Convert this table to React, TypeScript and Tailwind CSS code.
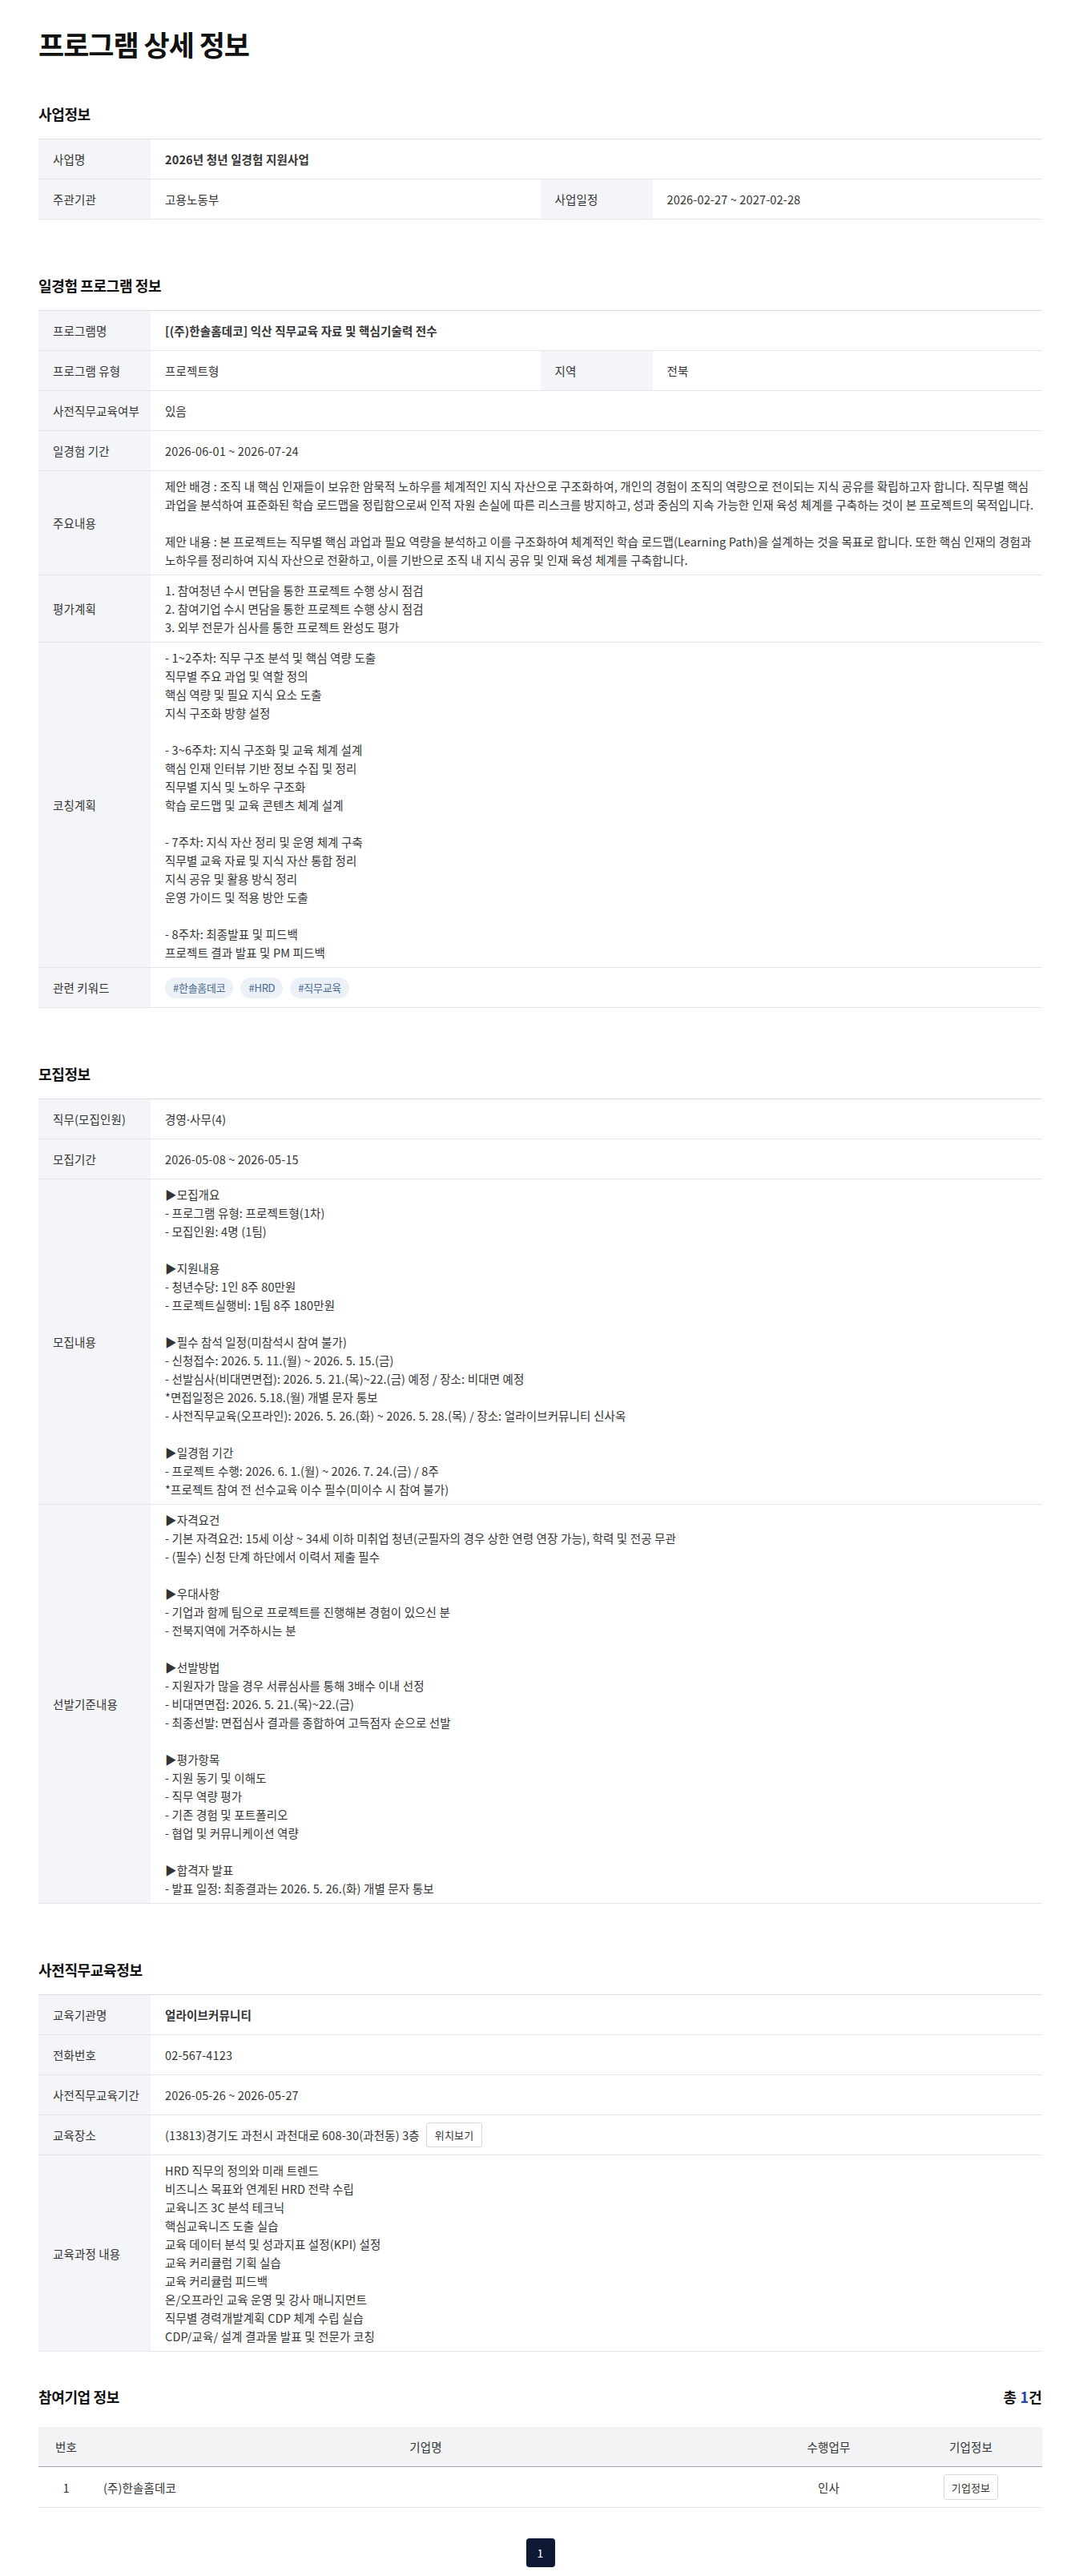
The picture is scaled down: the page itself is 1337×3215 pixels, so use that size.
import React from 'react'

const coaching = `- 1~2주차: 직무 구조 분석 및 핵심 역량 도출
직무별 주요 과업 및 역할 정의
핵심 역량 및 필요 지식 요소 도출
지식 구조화 방향 설정

- 3~6주차: 지식 구조화 및 교육 체계 설계
핵심 인재 인터뷰 기반 정보 수집 및 정리
직무별 지식 및 노하우 구조화
학습 로드맵 및 교육 콘텐츠 체계 설계

- 7주차: 지식 자산 정리 및 운영 체계 구축
직무별 교육 자료 및 지식 자산 통합 정리
지식 공유 및 활용 방식 정리
운영 가이드 및 적용 방안 도출

- 8주차: 최종발표 및 피드백
프로젝트 결과 발표 및 PM 피드백`

const recruit = `▶모집개요
- 프로그램 유형: 프로젝트형(1차)
- 모집인원: 4명 (1팀)

▶지원내용
- 청년수당: 1인 8주 80만원
- 프로젝트실행비: 1팀 8주 180만원

▶필수 참석 일정(미참석시 참여 불가)
- 신청접수: 2026. 5. 11.(월) ~ 2026. 5. 15.(금)
- 선발심사(비대면면접): 2026. 5. 21.(목)~22.(금) 예정 / 장소: 비대면 예정
*면접일정은 2026. 5.18.(월) 개별 문자 통보
- 사전직무교육(오프라인): 2026. 5. 26.(화) ~ 2026. 5. 28.(목) / 장소: 얼라이브커뮤니티 신사옥

▶일경험 기간
- 프로젝트 수행: 2026. 6. 1.(월) ~ 2026. 7. 24.(금) / 8주
*프로젝트 참여 전 선수교육 이수 필수(미이수 시 참여 불가)`

const selection = `▶자격요건
- 기본 자격요건: 15세 이상 ~ 34세 이하 미취업 청년(군필자의 경우 상한 연령 연장 가능), 학력 및 전공 무관
- (필수) 신청 단계 하단에서 이력서 제출 필수

▶우대사항
- 기업과 함께 팀으로 프로젝트를 진행해본 경험이 있으신 분
- 전북지역에 거주하시는 분

▶선발방법
- 지원자가 많을 경우 서류심사를 통해 3배수 이내 선정
- 비대면면접: 2026. 5. 21.(목)~22.(금)
- 최종선발: 면접심사 결과를 종합하여 고득점자 순으로 선발

▶평가항목
- 지원 동기 및 이해도
- 직무 역량 평가
- 기존 경험 및 포트폴리오
- 협업 및 커뮤니케이션 역량

▶합격자 발표
- 발표 일정: 최종결과는 2026. 5. 26.(화) 개별 문자 통보`

const curriculum = `HRD 직무의 정의와 미래 트렌드
비즈니스 목표와 연계된 HRD 전략 수립
교육니즈 3C 분석 테크닉
핵심교육니즈 도출 실습
교육 데이터 분석 및 성과지표 설정(KPI) 설정
교육 커리큘럼 기획 실습
교육 커리큘럼 피드백
온/오프라인 교육 운영 및 강사 매니지먼트
직무별 경력개발계획 CDP 체계 수립 실습
CDP/교육/ 설계 결과물 발표 및 전문가 코칭`

const evaluation = `1. 참여청년 수시 면담을 통한 프로젝트 수행 상시 점검
2. 참여기업 수시 면담을 통한 프로젝트 수행 상시 점검
3. 외부 전문가 심사를 통한 프로젝트 완성도 평가`

const mainContent = `제안 배경 : 조직 내 핵심 인재들이 보유한 암묵적 노하우를 체계적인 지식 자산으로 구조화하여, 개인의 경험이 조직의 역량으로 전이되는 지식 공유를 확립하고자 합니다. 직무별 핵심
과업을 분석하여 표준화된 학습 로드맵을 정립함으로써 인적 자원 손실에 따른 리스크를 방지하고, 성과 중심의 지속 가능한 인재 육성 체계를 구축하는 것이 본 프로젝트의 목적입니다.

제안 내용 : 본 프로젝트는 직무별 핵심 과업과 필요 역량을 분석하고 이를 구조화하여 체계적인 학습 로드맵(Learning Path)을 설계하는 것을 목표로 합니다. 또한 핵심 인재의 경험과
노하우를 정리하여 지식 자산으로 전환하고, 이를 기반으로 조직 내 지식 공유 및 인재 육성 체계를 구축합니다.`

function Label({ children }: { children: React.ReactNode }) {
  return (
    <div className="w-[140px] shrink-0 bg-[#f3f5f8] flex items-center pl-[18px] text-[#333]">
      {children}
    </div>
  )
}

function Value({ children, bold }: { children: React.ReactNode; bold?: boolean }) {
  return (
    <div
      className={`flex-1 flex items-center px-[18px] py-[7px] text-[#333] whitespace-pre-line ${
        bold ? 'font-bold text-[#222]' : ''
      }`}
    >
      {children}
    </div>
  )
}

function Row({ label, children, bold }: { label: string; children: React.ReactNode; bold?: boolean }) {
  return (
    <div className="flex min-h-[50px] border-b border-[#e3e6ea]">
      <Label>{label}</Label>
      <Value bold={bold}>{children}</Value>
    </div>
  )
}

function HalfRow({ items }: { items: [string, string][] }) {
  return (
    <div className="flex min-h-[50px] border-b border-[#e3e6ea]">
      {items.map(([l, v]) => (
        <div key={l} className="flex flex-1">
          <Label>{l}</Label>
          <Value>{v}</Value>
        </div>
      ))}
    </div>
  )
}

function Section({ title, children, first }: { title: string; children: React.ReactNode; first?: boolean }) {
  return (
    <section className={first ? 'mt-[50px]' : 'mt-[69px]'}>
      <h2 className="text-[18px] leading-[27px] font-bold text-[#111] tracking-[-0.02em] mb-[17px]">{title}</h2>
      <div className="border-t border-[#dcdfe3]">{children}</div>
    </section>
  )
}

export default function App() {
  return (
    <div
      className="min-h-screen bg-white pl-[48px] pt-[31px] pb-[17px] text-[14.5px] leading-[23px] tracking-[0.01em]"
      style={{ fontFamily: '"Noto Sans CJK KR", "Noto Sans", sans-serif' }}
    >
      <div className="w-[1253px]">
        <h1 className="text-[35px] leading-[48px] font-bold text-[#111] tracking-[-0.03em]">프로그램 상세 정보</h1>

        {/* 사업정보 */}
        <Section title="사업정보" first>
          <Row label="사업명" bold>
            2026년 청년 일경험 지원사업
          </Row>
          <HalfRow
            items={[
              ['주관기관', '고용노동부'],
              ['사업일정', '2026-02-27 ~ 2027-02-28'],
            ]}
          />
        </Section>

        {/* 일경험 프로그램 정보 */}
        <Section title="일경험 프로그램 정보">
          <Row label="프로그램명" bold>
            [(주)한솔홈데코] 익산 직무교육 자료 및 핵심기술력 전수
          </Row>
          <HalfRow
            items={[
              ['프로그램 유형', '프로젝트형'],
              ['지역', '전북'],
            ]}
          />
          <Row label="사전직무교육여부">있음</Row>
          <Row label="일경험 기간">2026-06-01 ~ 2026-07-24</Row>
          <Row label="주요내용">
            <div className="whitespace-pre">{mainContent}</div>
          </Row>
          <Row label="평가계획">{evaluation}</Row>
          <Row label="코칭계획">{coaching}</Row>
          <div className="flex min-h-[50px] border-b border-[#e3e6ea]">
            <Label>관련 키워드</Label>
            <div className="flex-1 flex items-center gap-[9px] px-[18px]">
              {['#한솔홈데코', '#HRD', '#직무교육'].map((k) => (
                <span
                  key={k}
                  className="h-[26px] px-[10px] rounded-full bg-[#ebf1f7] text-[#46698d] text-[13px] tracking-[-0.02em] flex items-center"
                >
                  {k}
                </span>
              ))}
            </div>
          </div>
        </Section>

        {/* 모집정보 */}
        <Section title="모집정보">
          <Row label="직무(모집인원)">
            <span>
              경영<span style={{ fontFamily: '"Noto Sans", sans-serif' }}>·</span>사무(4)
            </span>
          </Row>
          <Row label="모집기간">2026-05-08 ~ 2026-05-15</Row>
          <Row label="모집내용">{recruit}</Row>
          <Row label="선발기준내용">{selection}</Row>
        </Section>

        {/* 사전직무교육정보 */}
        <Section title="사전직무교육정보">
          <Row label="교육기관명" bold>
            얼라이브커뮤니티
          </Row>
          <Row label="전화번호">02-567-4123</Row>
          <Row label="사전직무교육기간">2026-05-26 ~ 2026-05-27</Row>
          <div className="flex min-h-[50px] border-b border-[#e3e6ea]">
            <Label>교육장소</Label>
            <div className="flex-1 flex items-center gap-[8px] px-[18px] text-[#333]">
              <span>(13813)경기도 과천시 과천대로 608-30(과천동) 3층</span>
              <button className="h-[31px] px-[10px] border border-[#d4d7db] rounded-[3px] bg-white text-[13px] text-[#333]">
                위치보기
              </button>
            </div>
          </div>
          <Row label="교육과정 내용">{curriculum}</Row>
        </Section>

        {/* 참여기업 정보 */}
        <section className="mt-[43px]">
          <div className="flex items-center justify-between mb-[24px]">
            <h2 className="text-[18px] leading-[27px] font-bold text-[#111] tracking-[-0.02em]">참여기업 정보</h2>
            <div className="text-[18px] leading-[27px] font-bold text-[#111]">
              총 <span className="text-[#1f48a6]">1</span>건
            </div>
          </div>
          <div>
            <div className="flex h-[50px] bg-[#f1f3f5] border-b border-[#a3a7ab] text-[#333] items-center text-center">
              <div className="w-[69px]">번호</div>
              <div className="flex-1">기업명</div>
              <div className="w-[177px]">수행업무</div>
              <div className="w-[178px]">기업정보</div>
            </div>
            <div className="flex h-[51px] border-b border-[#e3e6ea] text-[#333] items-center">
              <div className="w-[69px] text-center">1</div>
              <div className="flex-1 pl-[12px]">(주)한솔홈데코</div>
              <div className="w-[177px] text-center">인사</div>
              <div className="w-[178px] flex justify-center">
                <button className="h-[32px] w-[68px] border border-[#d9dcdf] rounded-[3px] bg-white text-[13px] text-[#333]">
                  기업정보
                </button>
              </div>
            </div>
          </div>
        </section>

        {/* 페이지네이션 */}
        <div className="mt-[38px] flex justify-center">
          <button className="w-[36px] h-[36px] rounded-[4px] bg-[#0e1a35] text-white text-[14px]">1</button>
        </div>
      </div>
    </div>
  )
}
